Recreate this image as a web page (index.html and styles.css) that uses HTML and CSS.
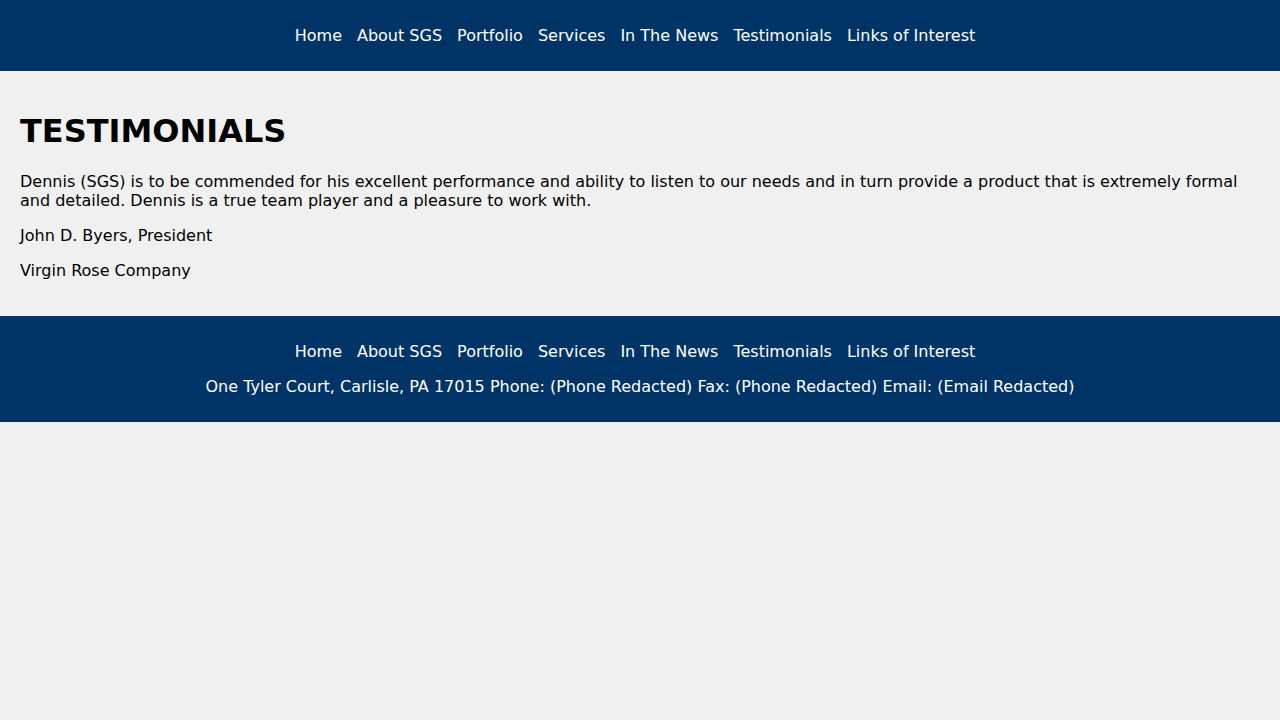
FILE: index.html
```html
<!DOCTYPE html>
<html lang="en">
<head>
<meta charset="utf-8">
<title>Testimonials - SGS</title>
<link rel="stylesheet" href="styles.css">
</head>
<body>
<header class="site-header">
  <nav class="nav">
    <a href="#">Home</a>
    <a href="#">About SGS</a>
    <a href="#">Portfolio</a>
    <a href="#">Services</a>
    <a href="#">In The News</a>
    <a href="#">Testimonials</a>
    <a href="#">Links of Interest</a>
  </nav>
</header>
<main class="content">
  <h1 class="title">TESTIMONIALS</h1>
  <p>Dennis (SGS) is to be commended for his excellent performance and ability to listen to our needs and in turn provide a product that is extremely formal and detailed. Dennis is a true team player and a pleasure to work with.</p>
  <p>John D. Byers, President</p>
  <p>Virgin Rose Company</p>
</main>
<footer class="site-footer">
  <nav class="nav">
    <a href="#">Home</a>
    <a href="#">About SGS</a>
    <a href="#">Portfolio</a>
    <a href="#">Services</a>
    <a href="#">In The News</a>
    <a href="#">Testimonials</a>
    <a href="#">Links of Interest</a>
  </nav>
  <p class="address">One Tyler Court, Carlisle, PA 17015 Phone: (Phone Redacted) Fax: (Phone Redacted) Email: (Email Redacted)</p>
</footer>
</body>
</html>
```
FILE: styles.css
```css
html, body {
  margin: 0;
  padding: 0;
}
body {
  background: #f0f0f0;
  color: #000;
  font-family: "DejaVu Sans", sans-serif;
  font-size: 16px;
  line-height: 19px;
}
.site-header {
  background: #003366;
  padding: 26px 0;
}
.nav {
  display: flex;
  justify-content: center;
  gap: 15px;
  padding-right: 10px;
}
.nav a {
  color: #ffffff;
  text-decoration: none;
}
.content {
  padding: 20px;
}
.title {
  font-size: 32px;
  line-height: 37px;
  font-weight: bold;
  margin: 21.5px 0 22.5px;
}
.content p {
  margin: 16px 0;
}
.site-footer {
  background: #003366;
  color: #ffffff;
  padding: 26px 0;
  text-align: center;
}
.address {
  margin: 16px 0 0;
}
```
